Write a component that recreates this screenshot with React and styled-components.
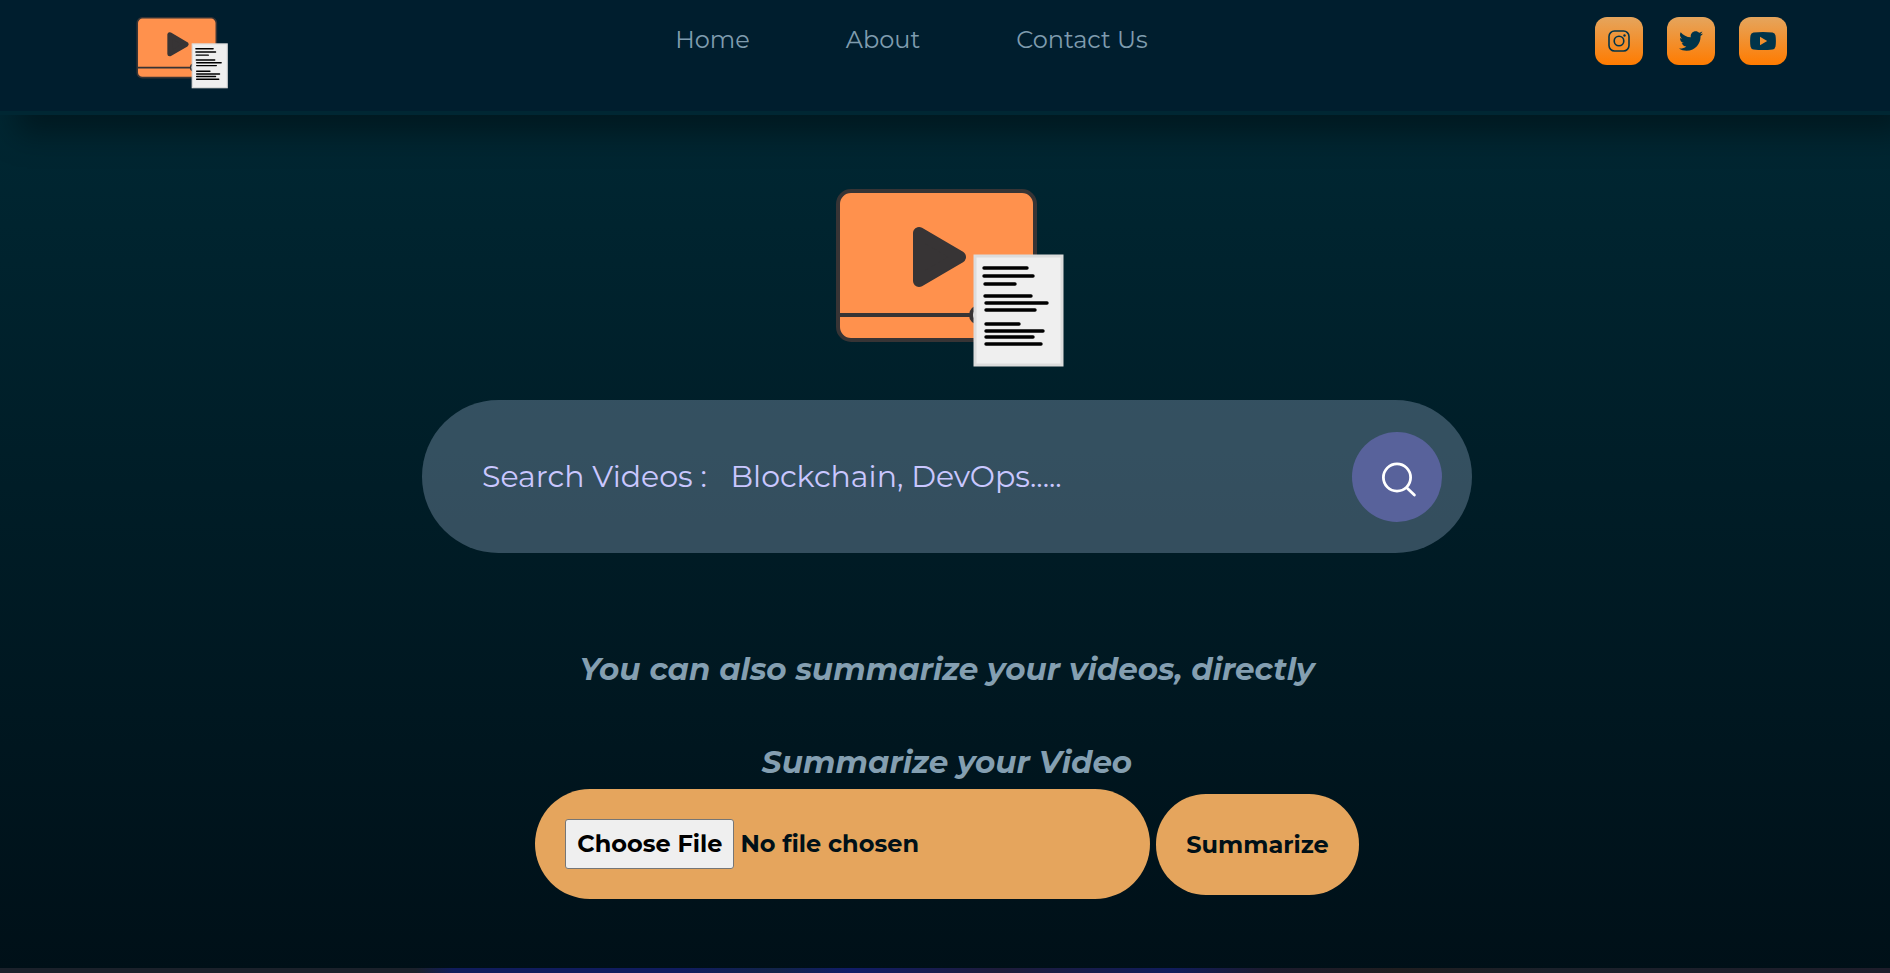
import React from "react";
import styled, { createGlobalStyle } from "styled-components";
import { FaTwitter } from "react-icons/fa";

const GlobalStyle = createGlobalStyle`
  * { box-sizing: border-box; }
  body {
    margin: 0;
    background: #001018;
    font-family: Montserrat, Inter, "Liberation Sans", sans-serif;
  }
`;

const Page = styled.div`
  display: flex;
  flex-direction: column;
  min-height: 100vh;
  background: linear-gradient(to bottom, #002a36, #001018);
`;

const Header = styled.header`
  display: flex;
  justify-content: space-between;
  align-items: flex-start;
  height: 115px;
  padding: 17px 103px 0 134px;
  background: #001e2e;
  border-bottom: 4px solid #002733;
  box-shadow: 16px 18px 30px rgba(0, 0, 0, 0.38);
`;

const Logo = styled.svg`
  display: block;
  flex: none;
  width: ${(p) => p.$width}px;
  aspect-ratio: 234 / 178;
`;

const Nav = styled.nav`
  display: flex;
  gap: 96px;
  padding-top: 8px;
`;

const NavLink = styled.a`
  font-size: 24px;
  line-height: 30px;
  color: #7f9cae;
  text-decoration: none;
`;

const Socials = styled.div`
  display: flex;
  gap: 24px;
`;

const SocialLink = styled.a`
  display: flex;
  align-items: center;
  justify-content: center;
  width: 48px;
  height: 48px;
  border-radius: 12px;
  color: #00344a;
  background: linear-gradient(to bottom, #e5a55d, #ff7b00);
`;

const Main = styled.main`
  display: flex;
  flex: 1;
  flex-direction: column;
  align-items: center;
  padding: 74px 20px 69px 24px;
`;

const SearchForm = styled.form`
  display: flex;
  align-items: center;
  width: 100%;
  max-width: 1050px;
  height: 153px;
  margin-top: 33px;
  padding: 0 30px;
  border-radius: 80px;
  background: rgba(130, 155, 180, 0.4);
`;

const SearchInput = styled.input`
  flex: 1;
  min-width: 0;
  padding: 24px 30px;
  border: 0;
  outline: none;
  background: transparent;
  font-family: inherit;
  font-size: 30px;
  color: #cac7ff;

  &::placeholder {
    color: #cac7ff;
    opacity: 1;
  }
`;

const SearchButton = styled.button`
  display: flex;
  align-items: center;
  justify-content: center;
  width: 90px;
  height: 90px;
  padding: 0;
  border: 0;
  border-radius: 50%;
  color: #fff;
  background: #58629b;
  cursor: pointer;
`;

const Tagline = styled.h2`
  margin: ${(p) => p.$top}px 0 0;
  font-size: 31px;
  line-height: 40px;
  font-weight: 700;
  font-style: italic;
  text-align: center;
  color: #849fb1;
`;

const UploadForm = styled.form`
  display: flex;
  flex-wrap: wrap;
  align-items: center;
  justify-content: center;
  gap: 6px;
  margin-top: 7px;
`;

const FileInput = styled.input`
  width: 615px;
  max-width: 100%;
  height: 110px;
  padding: 30px;
  border-radius: 55px;
  background: #e5a55d;
  font-family: inherit;
  font-size: 24px;
  font-weight: 700;
  line-height: 30px;
  color: #001018;

  &::file-selector-button {
    height: 50px;
    margin-right: 6px;
    padding: 0 11px;
    border: 1px solid #767676;
    border-radius: 3px;
    background: #efefef;
    font: inherit;
    color: #000;
  }
`;

const SubmitButton = styled.button`
  height: 101px;
  padding: 0 30px;
  border: 0;
  border-radius: 50px;
  background: #e5a55d;
  font-family: inherit;
  font-size: 24px;
  font-weight: 700;
  color: #001018;
  cursor: pointer;
`;

const FooterStrip = styled.footer`
  height: 5px;
  background: linear-gradient(
    to right,
    #1b212b 0%,
    #1b212b 22%,
    #101c5c 24%,
    #101c60 36%,
    #12244a 41%,
    #101c68 45%,
    #1e1c3a 53%,
    #101c5c 62%,
    #1c1b2e 67%,
    #201e20 74%,
    #1b212b 82%,
    #1e1d2b 100%
  );
`;

const TEXT_LINES = [
  [154, 79, 198],
  [154, 87, 204],
  [155, 95, 186],
  [155, 107, 202],
  [156, 114, 218],
  [156, 121, 206],
  [156, 135, 190],
  [156, 142, 214],
  [156, 148, 204],
  [156, 155, 212],
];

function BrandLogo({ width, label }) {
  return (
    <Logo $width={width} viewBox="-6 0 234 178" role="img" aria-label={label}>
      <rect x="2" y="2" width="197" height="149" rx="13" fill="#ff914d" stroke="#373435" strokeWidth="4" />
      <path d="M83 44v48l41-24z" fill="#373435" stroke="#373435" strokeWidth="12" strokeLinejoin="round" />
      <path d="M3 126h135" stroke="#373435" strokeWidth="4" />
      <circle cx="143" cy="126" r="8" fill="#ddd" stroke="#373435" strokeWidth="4" />
      <rect x="139" y="67" width="87" height="109" fill="#efefef" stroke="#dcdcdc" strokeWidth="3" />
      {TEXT_LINES.map(([x1, y, x2]) => (
        <path key={y} d={`M${x1 - 6} ${y}H${x2 - 7}`} stroke="#000" strokeWidth="3.4" strokeLinecap="round" />
      ))}
    </Logo>
  );
}

function InstagramIcon() {
  return (
    <svg width="24" height="24" viewBox="0 0 24 24" fill="none" stroke="currentColor" strokeWidth="1.6">
      <rect x="2" y="2" width="20" height="20" rx="5.5" />
      <circle cx="12" cy="12" r="4.8" />
      <circle cx="17.5" cy="6.5" r="1.2" fill="currentColor" stroke="none" />
    </svg>
  );
}

function YoutubeIcon() {
  return (
    <svg width="26" height="18" viewBox="0 0 26 18" fill="currentColor">
      <path
        fillRule="evenodd"
        d="M3.5.6Q13-.5 22.5.6 25 .9 25.5 3.5 26.3 9 25.5 14.5 25 17.1 22.5 17.4 13 18.5 3.5 17.4 1 17.1.5 14.5-.3 9 .5 3.5 1 .9 3.5.6zM10 4.8v8.4L17.2 9z"
      />
    </svg>
  );
}

function SearchIcon() {
  return (
    <svg width="40" height="40" viewBox="0 0 40 40" fill="none" stroke="currentColor" strokeWidth="2.8" strokeLinecap="round">
      <circle cx="20" cy="20.5" r="13.6" />
      <path d="M30 31l7.4 7" />
    </svg>
  );
}

export default function App() {
  return (
    <>
      <GlobalStyle />
      <Page>
        <Header>
          <BrandLogo width={94} label="Video summarizer" />
          <Nav>
            <NavLink href="#home">Home</NavLink>
            <NavLink href="#about">About</NavLink>
            <NavLink href="#contact">Contact Us</NavLink>
          </Nav>
          <Socials>
            <SocialLink href="#instagram" aria-label="Instagram">
              <InstagramIcon />
            </SocialLink>
            <SocialLink href="#twitter" aria-label="Twitter">
              <FaTwitter size={24} />
            </SocialLink>
            <SocialLink href="#youtube" aria-label="YouTube">
              <YoutubeIcon />
            </SocialLink>
          </Socials>
        </Header>
        <Main>
          <BrandLogo width={234} label="Video with a written summary" />
          <SearchForm onSubmit={(e) => e.preventDefault()}>
            <SearchInput
              type="text"
              aria-label="Search videos"
              placeholder="Search Videos :   Blockchain, DevOps....."
            />
            <SearchButton type="submit" aria-label="Search">
              <SearchIcon />
            </SearchButton>
          </SearchForm>
          <Tagline $top={96}>You can also summarize your videos, directly</Tagline>
          <Tagline $top={53}>Summarize your Video</Tagline>
          <UploadForm onSubmit={(e) => e.preventDefault()}>
            <FileInput type="file" aria-label="Video file" />
            <SubmitButton type="submit">Summarize</SubmitButton>
          </UploadForm>
        </Main>
        <FooterStrip />
      </Page>
    </>
  );
}
